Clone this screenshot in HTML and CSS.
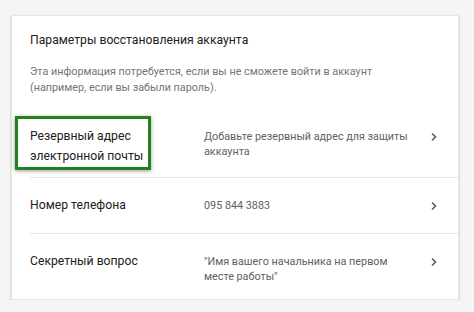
FILE: index.html
```html
<!DOCTYPE html>
<html lang="ru">
<head>
    <meta charset="UTF-8">
    <title>Параметры восстановления аккаунта</title>
    <link rel="stylesheet" href="styles.css">
</head>
<body>
    <div class="card">
        <div class="card-header">
            <h2 class="card-title">Параметры восстановления аккаунта</h2>
            <p class="card-desc">Эта информация потребуется, если вы не сможете войти в аккаунт<br>(например, если вы забыли пароль).</p>
        </div>

        <div class="row row-first">
            <div class="row-label">
                <span class="highlight"></span>
                Резервный адрес<br>электронной почты
            </div>
            <div class="row-value">Добавьте резервный адрес для защиты аккаунта</div>
            <svg class="chevron" width="8" height="10" viewBox="0 0 8 10"><path d="M2 1.5l3.5 3.5-3.5 3.5" fill="none" stroke="#5f6368" stroke-width="1.7"/></svg>
        </div>

        <div class="row">
            <div class="row-label">Номер телефона</div>
            <div class="row-value">095 844 3883</div>
            <svg class="chevron" width="8" height="10" viewBox="0 0 8 10"><path d="M2 1.5l3.5 3.5-3.5 3.5" fill="none" stroke="#5f6368" stroke-width="1.7"/></svg>
        </div>

        <div class="row">
            <div class="row-label">Секретный вопрос</div>
            <div class="row-value">"Имя вашего начальника на первом месте работы"</div>
            <svg class="chevron" width="8" height="10" viewBox="0 0 8 10"><path d="M2 1.5l3.5 3.5-3.5 3.5" fill="none" stroke="#5f6368" stroke-width="1.7"/></svg>
        </div>
    </div>
</body>
</html>
```

FILE: styles.css
```css
body {
    margin: 0;
    background-color: #f5f5f5;
    font-family: Roboto, "Noto Sans", Arial, sans-serif;
    padding: 15px 0 0 11px;
}
.card {
    width: 448px;
    height: 285px;
    box-sizing: border-box;
    background-color: #ffffff;
    border: 1px solid #e6e6e6;
    box-shadow: 0 1px 2px rgba(0, 0, 0, 0.25);
}
.card-header {
    padding: 14px 19px 0 18px;
}
.card-title {
    margin: 0;
    font-size: 12.2px;
    font-weight: 400;
    line-height: 20px;
    color: #212121;
}
.card-desc {
    margin: 14px 0 0;
    font-size: 10.8px;
    line-height: 16px;
    color: #757575;
}
.row {
    display: flex;
    align-items: flex-start;
    margin-left: 18px;
    padding: 17px 0 18px;
    border-top: 1px solid #e5e5e5;
}
.row-first {
    border-top: none;
    margin-top: 13px;
    padding: 17px 0 11px;
}
.row-label {
    position: relative;
    width: 174px;
    flex-shrink: 0;
    font-size: 12.2px;
    line-height: 20px;
    color: #212121;
}
.row-value {
    width: 205px;
    font-size: 10.8px;
    line-height: 15px;
    color: #616161;
    padding-top: 3px;
}
.chevron {
    margin: 6px 0 0 21px;
}
.highlight {
    position: absolute;
    left: -15px;
    top: -10px;
    width: 136px;
    height: 54px;
    box-sizing: border-box;
    border: 3px solid #1f821f;
    box-shadow: 0 1px 4px rgba(0, 0, 0, 0.4);
}
```
